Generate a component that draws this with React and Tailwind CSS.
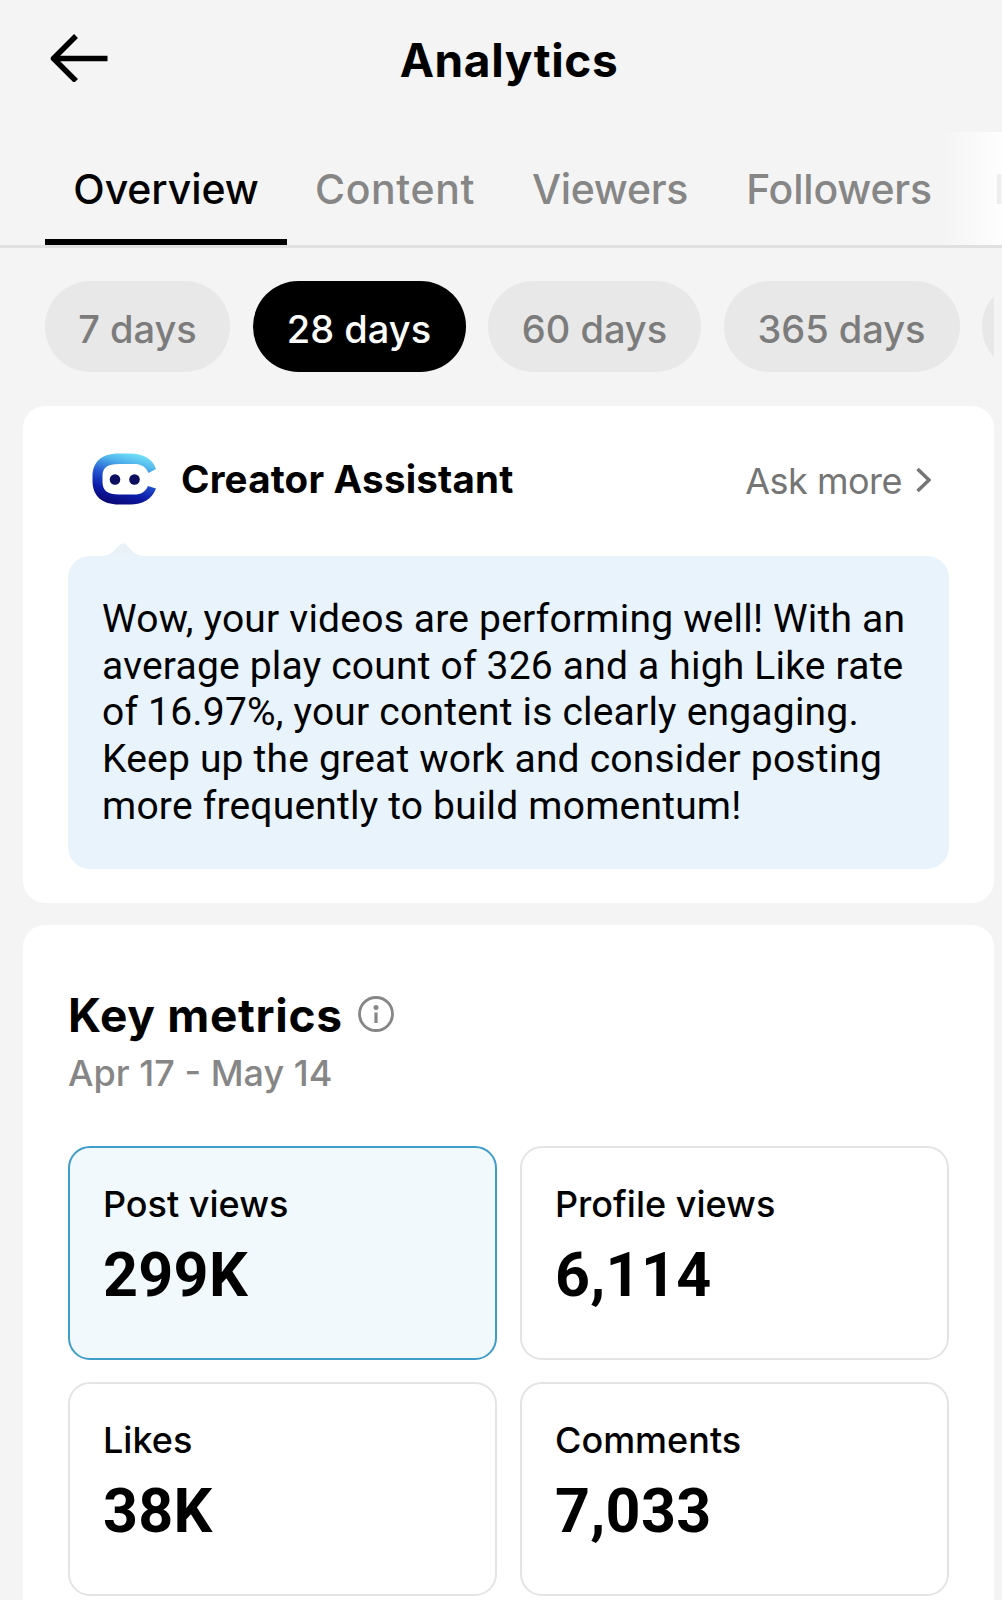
import React, { useState } from 'react';
import clsx from 'clsx';

const TABS = [
  { label: 'Overview', spacing: 'tracking-[-0.1px]', width: 'w-[242px]' },
  { label: 'Content', spacing: 'tracking-[0.6px]', width: 'w-[216px]' },
  { label: 'Viewers', spacing: 'tracking-[-0.3px]', width: 'w-[214px]' },
  { label: 'Followers', spacing: 'tracking-[-0.2px]', width: 'w-[244px]' },
  { label: 'LIVE', spacing: 'tracking-[0.1px]', width: 'w-[154px]' },
];

const RANGES = [
  { label: '7 days', width: 'w-[185px]' },
  { label: '28 days', width: 'w-[213px]' },
  { label: '60 days', width: 'w-[213px]' },
  { label: '365 days', width: 'w-[236px]' },
  { label: '', width: 'w-[200px]' },
];

const METRICS = [
  { label: 'Post views', value: '299K' },
  { label: 'Profile views', value: '6,114' },
  { label: 'Likes', value: '38K' },
  { label: 'Comments', value: '7,033' },
];

const AssistantLogo = () => (
  <svg className="h-[52px] w-[66px]" viewBox="0 0 66 52" fill="none">
    <defs>
      <linearGradient id="logoBody" x1="44" y1="0" x2="30" y2="52" gradientUnits="userSpaceOnUse">
        <stop offset="0" stopColor="#74e4f8" />
        <stop offset="0.22" stopColor="#50b4ec" />
        <stop offset="0.5" stopColor="#2457d2" />
        <stop offset="0.78" stopColor="#0c1ba8" />
        <stop offset="1" stopColor="#0b0a78" />
      </linearGradient>
    </defs>
    <path
      d="M64 16C61 6 51 0.5 38 0.5H27C9 0.5 0.5 9 0.5 24V28C0.5 43 10 51.5 27 51.5H38C51 51.5 60 46 64 35.5L56 33C53.500 39 49 41.500 42 41.500H27C15.500 41.500 10.500 37.500 10.500 29V23C10.500 14.500 15.500 11 27 11H42C49 11 53.500 13.500 56.500 20Z"
      fill="url(#logoBody)"
    />
    <circle cx="23" cy="26.500" r="5.300" fill="#0b0d5e" />
    <circle cx="42.500" cy="26.500" r="5.300" fill="#0b0d5e" />
  </svg>
);

const App = () => {
  const [activeTab, setActiveTab] = useState('Overview');
  const [activeRange, setActiveRange] = useState('28 days');
  const [activeMetric, setActiveMetric] = useState('Post views');

  return (
    <div className="h-[1600px] w-[1002px] overflow-hidden bg-[#f4f4f4] font-['Inter',sans-serif] text-black">
      {/* Header */}
      <header className="grid h-[132px] grid-cols-[1fr_auto_1fr] items-start px-[50px]">
        <button className="mt-[34px] w-[58px]">
          <svg className="h-12 w-[58px]" viewBox="0 0 58 48" fill="none" stroke="currentColor" strokeWidth="5.500">
            <path d="M57.500 24.500H4M26 2L3.500 24.500L26 47" strokeLinejoin="round" />
          </svg>
        </button>
        <h1 className="mt-8 ml-4 text-[46px] leading-[56px] font-bold tracking-[0.6px]">Analytics</h1>
      </header>

      {/* Tabs */}
      <nav className="relative flex h-[116px] overflow-hidden border-b-[3px] border-[#e0e0e0] pl-[45px]">
        {TABS.map((tab) => (
          <button
            key={tab.label}
            onClick={() => setActiveTab(tab.label)}
            className={clsx(
              'h-full shrink-0 border-b-[6px] pt-[9px] text-[41px] font-medium',
              tab.spacing,
              tab.width,
              activeTab === tab.label ? 'border-black' : 'border-transparent text-[#868686]'
            )}
          >
            {tab.label}
          </button>
        ))}
        <div className="absolute inset-y-0 right-0 w-[60px] bg-linear-to-r from-white/0 to-white/90" />
      </nav>

      {/* Date ranges */}
      <div className="mr-2 flex gap-[22.500px] overflow-hidden pt-[33px] pb-[34px] pl-[45px]">
        {RANGES.map((range) => (
          <button
            key={range.label}
            onClick={() => setActiveRange(range.label)}
            className={clsx(
              'h-[91px] shrink-0 rounded-full pt-[5px] text-[38px] font-medium',
              range.width,
              activeRange === range.label ? 'bg-black text-white' : 'bg-[#e8e8e8] text-[#7c7c7c]'
            )}
          >
            {range.label}
          </button>
        ))}
      </div>

      <main className="mr-2 ml-[23px] flex flex-col gap-[22px]">
        {/* Creator Assistant */}
        <section className="h-[497px] rounded-[22px] bg-white px-[45px] pt-[47px]">
          <div className="flex h-[52px] items-center pr-[18px] pl-6">
            <AssistantLogo />
            <h2 className="ml-[23px] pt-0.5 text-[38.500px] font-bold tracking-[0.2px]">Creator Assistant</h2>
            <button className="ml-auto flex items-center gap-3.5 pt-[3px] text-[36px] tracking-[-0.5px] text-[#757575]">
              Ask more
              <svg className="-mt-0.5 h-6 w-[15px]" viewBox="0 0 15 24" fill="none" stroke="currentColor" strokeWidth="3.500">
                <path d="M1.500 1L13 12L1.500 23" />
              </svg>
            </button>
          </div>
          <svg className="mt-[38px] ml-[35px] block h-[13px] w-10" viewBox="0 0 40 13" fill="#e8f2f8">
            <path d="M0 13C8 12 11 8 16 2.500C18.500 -0.500 21.500 -0.500 24 2.500C29 8 32 12 40 13Z" />
          </svg>
          <div className="h-[313px] rounded-[22px] bg-[#e8f3fc] pt-10 pl-[34px] font-['Roboto',sans-serif] text-[39px] leading-[46.700px] tracking-[0.2px] whitespace-nowrap">
            <p>Wow, your videos are performing well! With an</p>
            <p>average play count of 326 and a high Like rate</p>
            <p>of 16.97%, your content is clearly engaging.</p>
            <p>Keep up the great work and consider posting</p>
            <p>more frequently to build momentum!</p>
          </div>
        </section>

        {/* Key metrics */}
        <section className="h-[720px] rounded-t-[22px] bg-white px-[45px] pt-[62px]">
          <div className="flex h-[56px] items-center gap-[15px]">
            <h2 className="text-[46px] font-bold tracking-[0.7px]">Key metrics</h2>
            <svg className="-mt-0.5 h-9 w-9" viewBox="0 0 36 36" fill="none" stroke="#868686" strokeWidth="2.800">
              <circle cx="18" cy="18" r="16.500" />
              <path d="M18 16.500V27" strokeWidth="3.200" />
              <circle cx="18" cy="11.500" r="2.500" fill="#868686" stroke="none" />
            </svg>
          </div>
          <p className="mt-1.5 text-[36px] leading-[48px] font-medium text-[#868686]">Apr 17 - May 14</p>
          <div className="mt-[49px] grid grid-cols-2 gap-x-[23px] gap-y-[22px]">
            {METRICS.map((metric) => (
              <button
                key={metric.label}
                onClick={() => setActiveMetric(metric.label)}
                className={clsx(
                  'flex h-[214px] flex-col items-start rounded-[22px] border-2 pt-[34px] pl-[33px]',
                  activeMetric === metric.label ? 'border-[#3f9dc8] bg-[#f2f9fd]' : 'border-[#e4e4e4]'
                )}
              >
                <span className="text-[36px] leading-[44px] font-medium">{metric.label}</span>
                <span className="mt-[13px] font-['Roboto',sans-serif] text-[61px] leading-[72px] font-bold tracking-[0.3px]">
                  {metric.value}
                </span>
              </button>
            ))}
          </div>
        </section>
      </main>
    </div>
  );
};

export default App;
